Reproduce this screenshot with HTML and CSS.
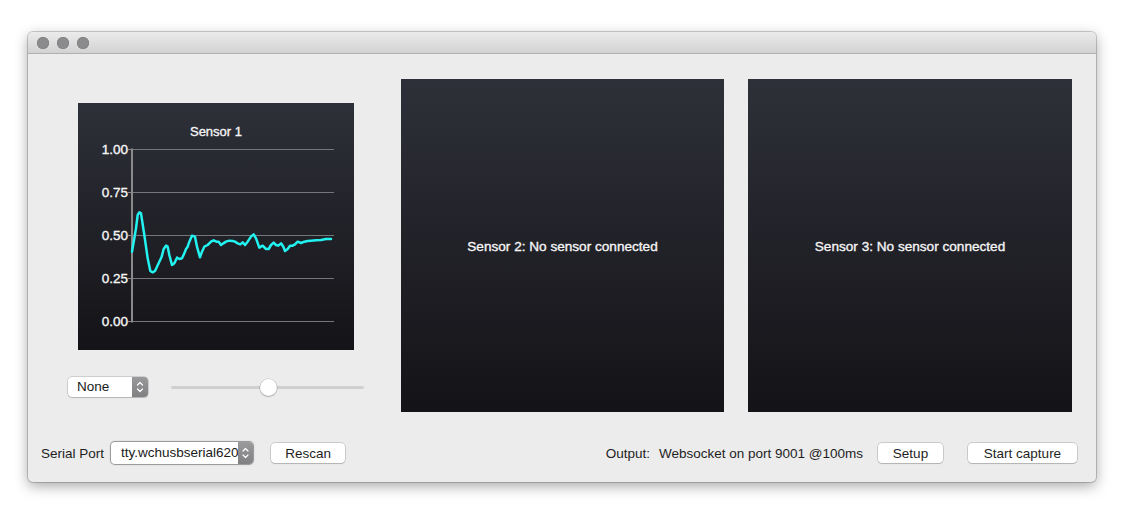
FILE: index.html
```html
<!DOCTYPE html>
<html>
<head>
<meta charset="utf-8">
<link rel="stylesheet" href="styles.css">
</head>
<body>
<div class="window">
  <div class="titlebar">
    <span class="light"></span><span class="light"></span><span class="light"></span>
  </div>
  <div class="content">
    <div class="row">
      <div class="leftcol">
        <div class="panel chart">
          <svg width="276" height="247" viewBox="0 0 276 247">
            <text class="title" x="138" y="33" text-anchor="middle">Sensor 1</text>
            <g class="grid">
              <line x1="54" y1="46.5" x2="256" y2="46.5"/>
              <line x1="54" y1="89.5" x2="256" y2="89.5"/>
              <line x1="54" y1="132.5" x2="256" y2="132.5"/>
              <line x1="54" y1="175.5" x2="256" y2="175.5"/>
              <line x1="54" y1="218.5" x2="256" y2="218.5"/>
            </g>
            <g class="ticks">
              <line x1="50" y1="46.5" x2="54" y2="46.5"/>
              <line x1="50" y1="89.5" x2="54" y2="89.5"/>
              <line x1="50" y1="132.5" x2="54" y2="132.5"/>
              <line x1="50" y1="175.5" x2="54" y2="175.5"/>
              <line x1="50" y1="218.5" x2="54" y2="218.5"/>
            </g>
            <line class="axis" x1="54" y1="45.5" x2="54" y2="219.5"/>
            <g class="labels" text-anchor="end">
              <text x="50" y="51">1.00</text>
              <text x="50" y="94">0.75</text>
              <text x="50" y="137">0.50</text>
              <text x="50" y="180">0.25</text>
              <text x="50" y="223">0.00</text>
            </g>
            <g transform="translate(-7 -8) scale(0.33333)">
              <polyline class="data" points="183,470 190,430 195,400 200,360 205,352 210,355 220,420 230,490 238,528 245,532 252,528 258,515 265,500 272,485 278,462 285,452 290,455 295,480 303,510 310,505 318,488 325,492 333,490 340,475 345,462 350,455 355,440 363,422 372,425 378,455 387,487 393,470 400,455 410,450 420,440 428,436 436,440 443,440 450,450 457,445 465,440 475,437 485,438 492,440 500,445 508,448 515,442 522,450 530,440 540,425 548,418 555,430 565,458 575,452 585,462 593,462 600,450 608,443 615,450 622,452 630,445 637,455 642,468 650,462 657,452 665,452 672,448 680,440 690,444 700,440 710,438 720,437 735,436 750,435 765,432 780,432"/>
            </g>
          </svg>
        </div>
        <div class="controls">
          <div class="popup small">
            <span class="popup-text">None</span>
            <span class="stepper">
              <svg width="16" height="20" viewBox="0 0 16 20"><path d="M5.5 8 L8 5.5 L10.5 8 M5.5 12 L8 14.5 L10.5 12" fill="none" stroke="#fff" stroke-width="1.2" stroke-linecap="round" stroke-linejoin="round"/></svg>
            </span>
          </div>
          <div class="slider">
            <div class="track"></div>
            <div class="knob"></div>
          </div>
        </div>
      </div>
      <div class="panel big"><span class="msg">Sensor 2: No sensor connected</span></div>
      <div class="panel big wide"><span class="msg">Sensor 3: No sensor connected</span></div>
    </div>
    <div class="bottombar">
      <span class="label">Serial Port</span>
      <div class="popup port">
        <span class="popup-text">tty.wchusbserial620</span>
        <span class="stepper">
          <svg width="15" height="22" viewBox="0 0 15 22"><path d="M5 9 L7.5 6.5 L10 9 M5 13 L7.5 15.5 L10 13" fill="none" stroke="#fff" stroke-width="1.2" stroke-linecap="round" stroke-linejoin="round"/></svg>
        </span>
      </div>
      <button class="btn rescan">Rescan</button>
      <span class="spacer"></span>
      <span class="label">Output:</span>
      <span class="label ws">Websocket on port 9001 @100ms</span>
      <button class="btn setup">Setup</button>
      <button class="btn capture">Start capture</button>
    </div>
  </div>
</div>
</body>
</html>
```
FILE: styles.css
```css
* { box-sizing: border-box; }
html, body { margin: 0; padding: 0; background: #ffffff; }
body {
  font-family: "Liberation Sans", Arial, sans-serif;
  font-size: 13.5px;
  color: #1e1e1e;
  padding: 32px 0 0 28px;
  width: 1127px;
  height: 522px;
  overflow: hidden;
}
.window {
  width: 1068px;
  height: 450px;
  background: #ececec;
  border-radius: 5px;
  box-shadow: 0 0 0 1px rgba(0,0,0,0.18), 0 4px 14px rgba(0,0,0,0.35);
  overflow: hidden;
  display: flex;
  flex-direction: column;
}
.titlebar {
  height: 22px;
  flex: none;
  background: linear-gradient(#ebebeb, #d2d2d2);
  border-bottom: 1px solid #b1b1b1;
  display: flex;
  align-items: center;
  padding-left: 9px;
  gap: 8px;
}
.light {
  width: 12px;
  height: 12px;
  border-radius: 50%;
  background: #8b8b8e;
  box-shadow: inset 0 0 0 0.5px #77777a;
}
.content {
  flex: 1;
  display: flex;
  flex-direction: column;
  padding: 25px 0 0 0;
}
.row {
  display: flex;
  height: 333px;
  padding-left: 39px;
}
.leftcol {
  width: 297px;
  margin-right: 37px;
  display: flex;
  flex-direction: column;
  align-items: center;
  padding-top: 24px;
}
.panel {
  background: linear-gradient(#2e3039, #141317);
}
.chart {
  width: 276px;
  height: 247px;
}
.chart svg { display: block; }
.chart .title {
  fill: #f4f4f4; font-size: 13px; font-family: "Liberation Sans", Arial, sans-serif;
  stroke: #f4f4f4; stroke-width: 0.35px;
}
.chart .labels text {
  fill: #f6f6f6; font-size: 13.5px; font-family: "Liberation Sans", Arial, sans-serif;
  stroke: #f6f6f6; stroke-width: 0.35px;
}
.grid line { stroke: #75767a; stroke-width: 1; }
.ticks line { stroke: #8a8a8c; stroke-width: 1; }
.axis { stroke: #8a8a8c; stroke-width: 2; }
.data { fill: none; stroke: #22f2f0; stroke-width: 7.5; stroke-linejoin: round; stroke-linecap: round; }
.controls {
  width: 297px;
  margin-top: 27px;
  display: flex;
  align-items: center;
}
.popup {
  display: flex;
  align-items: stretch;
  background: #fff;
  border-radius: 4px;
  box-shadow: 0 0 0 0.5px rgba(0,0,0,0.25), 0 1px 1px rgba(0,0,0,0.12);
  overflow: hidden;
}
.popup.small { width: 80px; height: 20px; margin-left: 1px; }
.popup-text {
  flex: 1;
  padding-left: 9px;
  line-height: 20px;
  white-space: nowrap;
  overflow: hidden;
  color: #1a1a1a;
}
.stepper {
  flex: none;
  width: 16px;
  background: linear-gradient(#9a9a9c, #808082);
  display: flex;
  align-items: center;
  justify-content: center;
}
.stepper svg { display: block; }
.slider {
  position: relative;
  width: 193px;
  height: 20px;
  margin-left: 23px;
}
.track {
  position: absolute;
  left: 0; right: 0;
  top: 9px;
  height: 3px;
  border-radius: 2px;
  background: #d0d0d0;
}
.knob {
  position: absolute;
  left: 89px;
  top: 2px;
  width: 17px;
  height: 17px;
  border-radius: 50%;
  background: #fff;
  box-shadow: 0 0 0 0.5px rgba(0,0,0,0.22), 0 1px 1.5px rgba(0,0,0,0.2);
}
.big {
  width: 323px;
  height: 333px;
  display: flex;
  align-items: center;
  justify-content: center;
  margin-right: 24px;
}
.big.wide { width: 324px; margin-right: 0; }
.msg {
  color: #f5f5f5; font-size: 13.6px; margin-top: 2px;
  -webkit-text-stroke: 0.35px #f5f5f5;
}
.bottombar {
  display: flex;
  align-items: center;
  height: 24px;
  margin-top: 29px;
  padding-left: 13px;
  padding-right: 19px;
}
.label { white-space: nowrap; color: #1e1e1e; }
.popup.port {
  width: 142px;
  height: 22px;
  margin-left: 7px;
  box-shadow: 0 0 0 1px rgba(0,0,0,0.28), 0 0 2px 1px rgba(0,0,0,0.12);
}
.popup.port .popup-text { line-height: 22px; padding-left: 10px; }
.popup.port .stepper { width: 15px; }
.btn {
  font-family: "Liberation Sans", Arial, sans-serif;
  font-size: 13.5px;
  color: #1e1e1e;
  background: #fff;
  border: none;
  border-radius: 4px;
  box-shadow: 0 0 0 0.5px rgba(0,0,0,0.28), 0 1px 1px rgba(0,0,0,0.12);
  height: 20px;
  padding: 0;
  margin: 0;
}
.rescan { width: 74px; margin-left: 18px; }
.spacer { flex: 1; }
.ws { margin-left: 9px; }
.setup { width: 65px; margin-left: 15px; }
.capture { width: 109px; margin-left: 25px; }
```
